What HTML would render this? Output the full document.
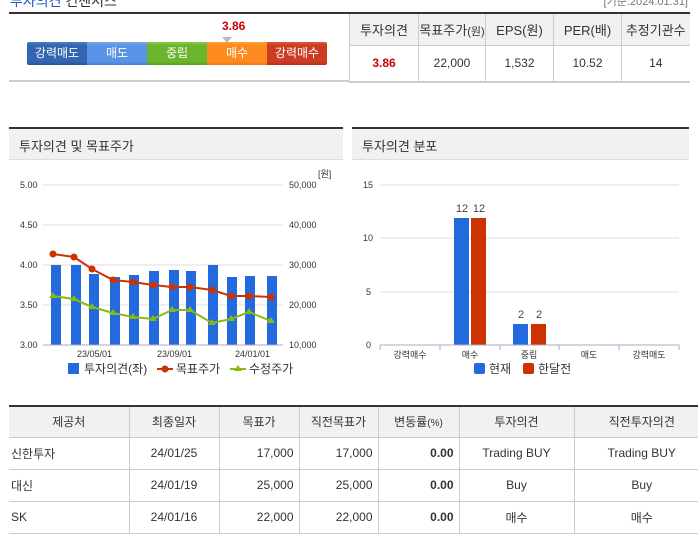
<!DOCTYPE html>
<html><head><meta charset="utf-8"><style>
*{margin:0;padding:0;box-sizing:border-box}
body{width:698px;height:516px;overflow:hidden;background:#fff;font-family:"Liberation Sans","Noto Sans CJK KR",sans-serif;font-size:12px;color:#333;position:relative}
.a{position:absolute}
table{border-collapse:collapse;position:absolute}
td{border:1px solid #ccc;text-align:center;white-space:nowrap}
.seg{position:absolute;top:42px;height:23px;width:60px;color:#fff;font-size:12px;text-align:center;line-height:23px}
</style></head><body>
<div class="a" style="left:10px;top:-9px;font-size:14px;color:#2255cc">투자의견 <span style="color:#333">컨센서스</span></div>
<div class="a" style="right:10px;top:-7px;font-size:11px;color:#777">[기준:2024.01.31]</div>
<!-- top left box -->
<div class="a" style="left:9px;top:12px;width:340px;height:70px;border-top:2px solid #333;border-bottom:2px solid #ccc"></div>
<div class="a" style="left:222px;top:19px;color:#cc0000;font-weight:bold;font-size:12px">3.86</div>
<div class="a" style="left:222px;top:37px;width:0;height:0;border-left:5px solid transparent;border-right:5px solid transparent;border-top:6px solid #bbb"></div>
<div class="seg" style="left:27px;background:linear-gradient(#4a7ec8,#3366b0 15%,#3366b0 85%,#2a5598);border-radius:2px 0 0 2px">강력매도</div>
<div class="seg" style="left:87px;background:linear-gradient(#7aa8ee,#5a94e6 15%,#5a94e6 85%,#4a80d4)">매도</div>
<div class="seg" style="left:147px;background:linear-gradient(#8cc850,#6ab52c 15%,#6ab52c 85%,#58a020)">중립</div>
<div class="seg" style="left:207px;background:linear-gradient(#ffa040,#fd8a1e 15%,#fd8a1e 85%,#f07810)">매수</div>
<div class="seg" style="left:267px;background:linear-gradient(#e05838,#cc3c22 15%,#cc3c22 85%,#b83018);border-radius:0 2px 2px 0">강력매수</div>
<!-- top right table -->
<table style="left:349px;top:12px;border-top:2px solid #333;border-bottom:2px solid #ccc;font-size:13px">
<tr style="background:#f1f1f1;height:32px"><td style="width:69px;border-left:1px solid #ccc">투자의견</td><td style="width:67px">목표주가<span style="font-size:11px">(원)</span></td><td style="width:68px">EPS(원)</td><td style="width:68px">PER(배)</td><td style="width:68px;border-right:none">추정기관수</td></tr>
<tr style="height:37px;font-size:12px"><td style="color:#cc0000;font-weight:bold">3.86</td><td>22,000</td><td>1,532</td><td>10.52</td><td style="border-right:none">14</td></tr>
</table>
<!-- left chart panel -->
<div class="a" style="left:9px;top:127px;width:334px;height:33px;border-top:2px solid #333;border-bottom:1px solid #ddd;background:#f1f1f1;padding:7px 0 0 10px;font-size:13px">투자의견 및 목표주가</div>
<svg class="a" style="left:0;top:160px" width="350" height="225" viewBox="0 160 350 225" font-family="Liberation Sans,Noto Sans CJK KR,sans-serif">
<g stroke="#ddd"><line x1="43" y1="185" x2="283" y2="185"/><line x1="43" y1="225" x2="283" y2="225"/><line x1="43" y1="265" x2="283" y2="265"/><line x1="43" y1="305" x2="283" y2="305"/></g>
<g font-size="9" fill="#333"><text x="20" y="188">5.00</text><text x="20" y="228">4.50</text><text x="20" y="268">4.00</text><text x="20" y="308">3.50</text><text x="20" y="348">3.00</text>
<text x="289" y="188">50,000</text><text x="289" y="228">40,000</text><text x="289" y="268">30,000</text><text x="289" y="308">20,000</text><text x="289" y="348">10,000</text><text x="318" y="177">[원]</text>
<text x="77" y="357">23/05/01</text><text x="157" y="357">23/09/01</text><text x="235" y="357">24/01/01</text></g>
<g fill="#226ade">
<rect x="51" y="265" width="10" height="80"/><rect x="71" y="265" width="10" height="80"/><rect x="89" y="274" width="10" height="71"/><rect x="110" y="277" width="10" height="68"/><rect x="129" y="275" width="10" height="70"/><rect x="149" y="271" width="10" height="74"/><rect x="169" y="270" width="10" height="75"/><rect x="186" y="271" width="10" height="74"/><rect x="208" y="265" width="10" height="80"/><rect x="227" y="277" width="10" height="68"/><rect x="245" y="276" width="10" height="69"/><rect x="267" y="276" width="10" height="69"/></g>
<line x1="43" y1="345" x2="283" y2="345" stroke="#aac"/>
<polyline fill="none" stroke="#cc3300" stroke-width="2" points="53,254 74,257 92,269 113,280 133,282 153,285 172,287 190,287 212,290 231,296 249,296 271,297"/>
<g fill="#cc3300"><circle cx="53" cy="254" r="3.5"/><circle cx="74" cy="257" r="3.5"/><circle cx="92" cy="269" r="3.5"/><circle cx="113" cy="280" r="3.5"/><circle cx="133" cy="282" r="3.5"/><circle cx="153" cy="285" r="3.5"/><circle cx="172" cy="287" r="3.5"/><circle cx="190" cy="287" r="3.5"/><circle cx="212" cy="290" r="3.5"/><circle cx="231" cy="296" r="3.5"/><circle cx="249" cy="296" r="3.5"/><circle cx="271" cy="297" r="3.5"/></g>
<polyline fill="none" stroke="#88bb11" stroke-width="2" points="53,296 74,299 92,307 113,313 133,317 153,319 172,310 190,310 212,323 231,319 249,312 271,321"/>
<g fill="#88bb11"><path d="M53,292l4,6h-8z"/><path d="M74,295l4,6h-8z"/><path d="M92,303l4,6h-8z"/><path d="M113,309l4,6h-8z"/><path d="M133,313l4,6h-8z"/><path d="M153,315l4,6h-8z"/><path d="M172,306l4,6h-8z"/><path d="M190,306l4,6h-8z"/><path d="M212,319l4,6h-8z"/><path d="M231,315l4,6h-8z"/><path d="M249,308l4,6h-8z"/><path d="M271,317l4,6h-8z"/></g>
<rect x="68" y="363" width="11" height="11" fill="#226ade"/><text x="84" y="373" font-size="12" fill="#333">투자의견(좌)</text>
<line x1="157" y1="369" x2="173" y2="369" stroke="#cc3300" stroke-width="2"/><circle cx="165" cy="369" r="3.5" fill="#cc3300"/><text x="176" y="373" font-size="12" fill="#333">목표주가</text>
<line x1="230" y1="369" x2="246" y2="369" stroke="#88bb11" stroke-width="2"/><path d="M238,365l4,6h-8z" fill="#88bb11"/><text x="249" y="373" font-size="12" fill="#333">수정주가</text>
</svg>
<!-- right chart panel -->
<div class="a" style="left:352px;top:127px;width:337px;height:33px;border-top:2px solid #333;border-bottom:1px solid #ddd;background:#f1f1f1;padding:7px 0 0 10px;font-size:13px">투자의견 분포</div>
<svg class="a" style="left:350px;top:160px" width="348" height="225" viewBox="350 160 348 225" font-family="Liberation Sans,Noto Sans CJK KR,sans-serif">
<g stroke="#ddd"><line x1="380" y1="185" x2="679" y2="185"/><line x1="380" y1="238" x2="679" y2="238"/><line x1="380" y1="292" x2="679" y2="292"/></g>
<g font-size="9" fill="#333"><text x="363" y="188">15</text><text x="363" y="241">10</text><text x="366" y="295">5</text><text x="366" y="348">0</text></g>
<rect x="454" y="218" width="15" height="127" fill="#226ade"/><rect x="471" y="218" width="15" height="127" fill="#cc3300"/>
<rect x="513" y="324" width="15" height="21" fill="#226ade"/><rect x="531" y="324" width="15" height="21" fill="#cc3300"/>
<g font-size="11" fill="#444" text-anchor="middle"><text x="462" y="212">12</text><text x="479" y="212">12</text><text x="521" y="318">2</text><text x="539" y="318">2</text></g>
<g stroke="#aac"><line x1="380" y1="345" x2="679" y2="345"/><line x1="380" y1="345" x2="380" y2="350"/><line x1="440" y1="345" x2="440" y2="350"/><line x1="500" y1="345" x2="500" y2="350"/><line x1="559" y1="345" x2="559" y2="350"/><line x1="619" y1="345" x2="619" y2="350"/><line x1="679" y1="345" x2="679" y2="350"/></g>
<g font-size="9" fill="#333" text-anchor="middle"><text x="410" y="358">강력매수</text><text x="470" y="358">매수</text><text x="529" y="358">중립</text><text x="589" y="358">매도</text><text x="649" y="358">강력매도</text></g>
<rect x="474" y="363" width="11" height="11" rx="2" fill="#226ade"/><text x="489" y="373" font-size="12" fill="#333">현재</text>
<rect x="523" y="363" width="11" height="11" rx="2" fill="#cc3300"/><text x="538" y="373" font-size="12" fill="#333">한달전</text>
</svg>
<!-- bottom table -->
<table style="left:9px;top:405px;width:700px;border-top:2px solid #333;font-size:12px">
<tr style="background:#f1f1f1;height:31px"><td style="width:120px;border-left:none">제공처</td><td style="width:90px">최종일자</td><td style="width:80px">목표가</td><td style="width:79px">직전목표가</td><td style="width:81px">변동률<span style="font-size:10px">(%)</span></td><td style="width:115px">투자의견</td><td style="border-right:none">직전투자의견</td></tr>
<tr style="height:32px"><td style="text-align:left;border-left:none;padding-left:2px">신한투자</td><td>24/01/25</td><td style="text-align:right;padding-right:5px">17,000</td><td style="text-align:right;padding-right:5px">17,000</td><td style="text-align:right;padding-right:5px;font-weight:bold">0.00</td><td>Trading BUY</td><td style="border-right:none">Trading BUY</td></tr>
<tr style="height:32px"><td style="text-align:left;border-left:none;padding-left:2px">대신</td><td>24/01/19</td><td style="text-align:right;padding-right:5px">25,000</td><td style="text-align:right;padding-right:5px">25,000</td><td style="text-align:right;padding-right:5px;font-weight:bold">0.00</td><td>Buy</td><td style="border-right:none">Buy</td></tr>
<tr style="height:32px"><td style="text-align:left;border-left:none;padding-left:2px">SK</td><td>24/01/16</td><td style="text-align:right;padding-right:5px">22,000</td><td style="text-align:right;padding-right:5px">22,000</td><td style="text-align:right;padding-right:5px;font-weight:bold">0.00</td><td>매수</td><td style="border-right:none">매수</td></tr>
</table>
</body></html>
